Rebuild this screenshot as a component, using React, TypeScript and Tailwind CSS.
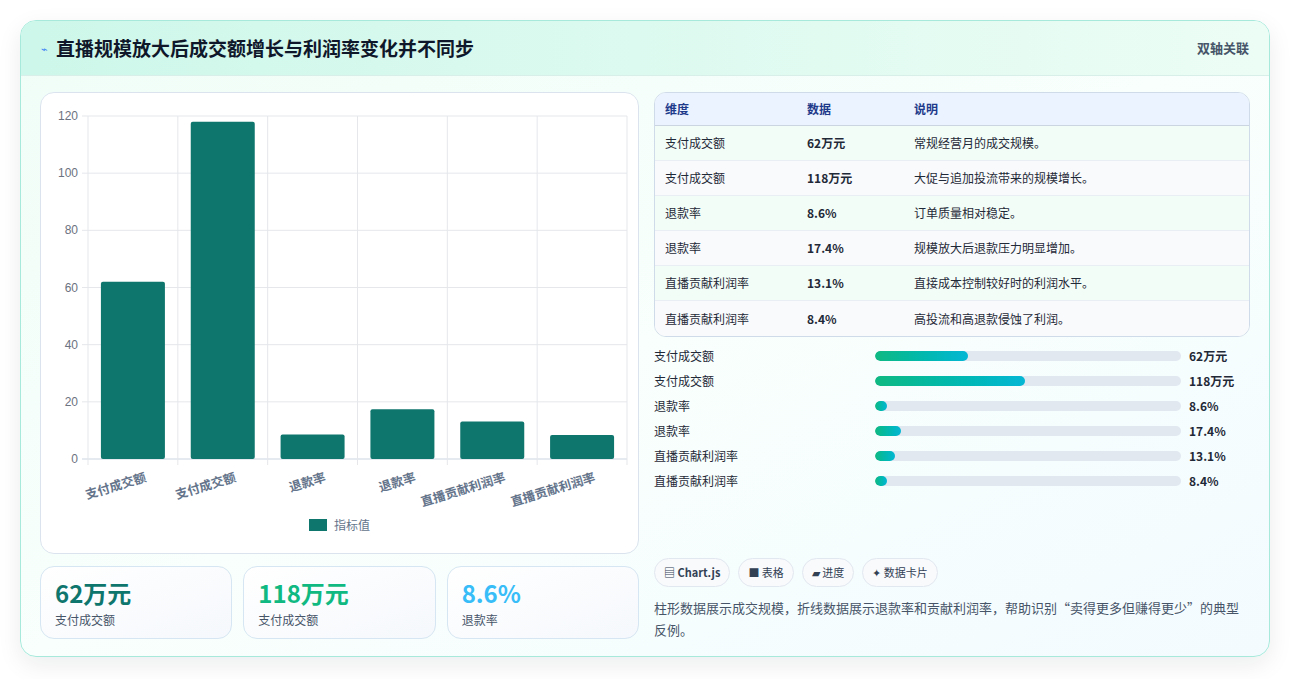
import React from "react";

const F = { fontFamily: '"Noto Sans CJK SC","Noto Sans",sans-serif' };

const bars = [
  { l: "支付成交额", v: 62 },
  { l: "支付成交额", v: 118 },
  { l: "退款率", v: 8.6 },
  { l: "退款率", v: 17.4 },
  { l: "直播贡献利润率", v: 13.1 },
  { l: "直播贡献利润率", v: 8.4 },
];

const rows = [
  ["支付成交额", "62万元", "常规经营月的成交规模。"],
  ["支付成交额", "118万元", "大促与追加投流带来的规模增长。"],
  ["退款率", "8.6%", "订单质量相对稳定。"],
  ["退款率", "17.4%", "规模放大后退款压力明显增加。"],
  ["直播贡献利润率", "13.1%", "直接成本控制较好时的利润水平。"],
  ["直播贡献利润率", "8.4%", "高投流和高退款侵蚀了利润。"],
];

const prog = [
  ["支付成交额", 93, "62万元"],
  ["支付成交额", 150, "118万元"],
  ["退款率", 12, "8.6%"],
  ["退款率", 26, "17.4%"],
  ["直播贡献利润率", 20, "13.1%"],
  ["直播贡献利润率", 12, "8.4%"],
] as const;

function Chart() {
  const x0 = 47, x1 = 586, yT = 23, yB = 366;
  const cw = (x1 - x0) / 6;
  const sy = (v: number) => yB - (v / 120) * (yB - yT);
  return (
    <svg width="598" height="461" className="block">
      {[0, 20, 40, 60, 80, 100, 120].map((t) => (
        <g key={t}>
          <line x1={x0 - 6} x2={x1} y1={sy(t)} y2={sy(t)} stroke={t === 0 ? "#cbd5e1" : "#e5e7eb"} />
          <text x={x0 - 10} y={sy(t) + 4} textAnchor="end" fontSize="12" fill="#6b7280" fontFamily="Liberation Sans, sans-serif">{t}</text>
        </g>
      ))}
      {Array.from({ length: 7 }).map((_, i) => (
        <line key={i} x1={x0 + i * cw} x2={x0 + i * cw} y1={yT} y2={yB + 6} stroke="#e5e7eb" />
      ))}
      {bars.map((b, i) => {
        const cx = x0 + i * cw + cw / 2;
        return (
          <g key={i}>
            <rect x={cx - 32} y={sy(b.v)} width={64} height={yB - sy(b.v)} rx={2} fill="#0f766e" />
            <text x={cx + 14} y={yB + 22} textAnchor="end" fontSize="12.5" fontWeight="600" fill="#64748b" transform={`rotate(-17 ${cx + 14} ${yB + 22})`} style={F}>{b.l}</text>
          </g>
        );
      })}
      <rect x={268} y={426} width={18} height={12} fill="#0f766e" />
      <text x={293} y={437} fontSize="12" fill="#64748b" style={F}>指标值</text>
    </svg>
  );
}

export default function App() {
  return (
    <div className="w-[1291px] h-[679px] bg-white pt-[20px] pl-[20px]" style={F}>
      <div className="w-[1250px] h-[637px] rounded-[16px] border border-[#a7eadc] shadow-[0_8px_24px_rgba(15,23,42,0.08)] overflow-hidden flex flex-col bg-gradient-to-br from-[#f0fdf7] via-[#f8fffc] to-[#f4fbff]">
        <div className="h-[55px] shrink-0 flex items-center justify-between px-[20px] bg-gradient-to-r from-[#cdf7ea] to-[#ecfdf5] border-b border-[#d7efe8]">
          <div className="flex items-center gap-[8px]">
            <span className="text-[#3b82f6] text-[11px]">⌁</span>
            <span className="text-[19px] font-bold text-[#0f172a]">直播规模放大后成交额增长与利润率变化并不同步</span>
          </div>
          <span className="text-[13px] text-[#475569] font-semibold">双轴关联</span>
        </div>
        <div className="flex gap-[15px] px-[19px] pt-[16px]">
          <div className="w-[599px] flex flex-col gap-[12px]">
            <div className="h-[462px] rounded-[14px] border border-[#dbe4ee] bg-white">
              <Chart />
            </div>
            <div className="grid grid-cols-3 gap-[11px]">
              {[
                ["62万元", "支付成交额", "text-[#0f766e]"],
                ["118万元", "支付成交额", "text-[#10b981]"],
                ["8.6%", "退款率", "text-[#38bdf8]"],
              ].map(([v, l, c], i) => (
                <div key={i} className="h-[73px] rounded-[14px] border border-[#d6e6f2] bg-gradient-to-br from-white to-[#f5f8fc] px-[14px] pt-[10px]">
                  <div className={`text-[24px] font-bold leading-[32px] ${c}`}>{v}</div>
                  <div className="text-[12px] text-[#475569] mt-[2px]">{l}</div>
                </div>
              ))}
            </div>
          </div>
          <div className="flex-1 flex flex-col">
            <div className="rounded-[12px] border border-[#cfdbe8] overflow-hidden bg-white text-[12px]">
              <div className="h-[33px] flex items-center bg-[#eaf3ff] text-[#1e3a8a] font-semibold border-b border-[#cbd5e1]">
                <div className="w-[152px] pl-[10px]">维度</div>
                <div className="w-[107px]">数据</div>
                <div>说明</div>
              </div>
              {rows.map((r, i) => (
                <div key={i} className={`h-[35px] flex items-center text-[#1f2937] ${i < 5 ? "border-b border-[#e8eef4]" : ""} ${i % 2 ? "bg-[#f8fafc]" : "bg-[#f3fdf8]"}`}>
                  <div className="w-[152px] pl-[10px]">{r[0]}</div>
                  <div className="w-[107px] font-semibold">{r[1]}</div>
                  <div>{r[2]}</div>
                </div>
              ))}
            </div>
            <div className="flex flex-col gap-[7px] mt-[10px]">
              {prog.map(([l, w, v], i) => (
                <div key={i} className="h-[18px] flex items-center text-[12px] text-[#1f2937]">
                  <div className="w-[221px]">{l}</div>
                  <div className="w-[306px] h-[10px] rounded-full bg-[#e2e8f0] overflow-hidden">
                    <div className="h-full rounded-full bg-gradient-to-r from-[#10b981] to-[#06b6d4]" style={{ width: w }} />
                  </div>
                  <div className="ml-[8px] font-bold">{v}</div>
                </div>
              ))}
            </div>
            <div className="flex gap-[8px] mt-[68px]">
              {["▤ Chart.js", "■ 表格", "▰ 进度", "✦ 数据卡片"].map((t, i) => (
                <span key={i} className={`h-[29px] px-[9px] flex items-center rounded-full border border-[#e2e8f0] bg-[#f8fafc] text-[11px] text-[#334155] ${i === 0 ? "font-bold" : ""}`}>{t}</span>
              ))}
            </div>
            <p className="mt-[10px] text-[13px] leading-[22px] text-[#475569]">柱形数据展示成交规模，折线数据展示退款率和贡献利润率，帮助识别“卖得更多但赚得更少”的典型反例。</p>
          </div>
        </div>
      </div>
    </div>
  );
}
